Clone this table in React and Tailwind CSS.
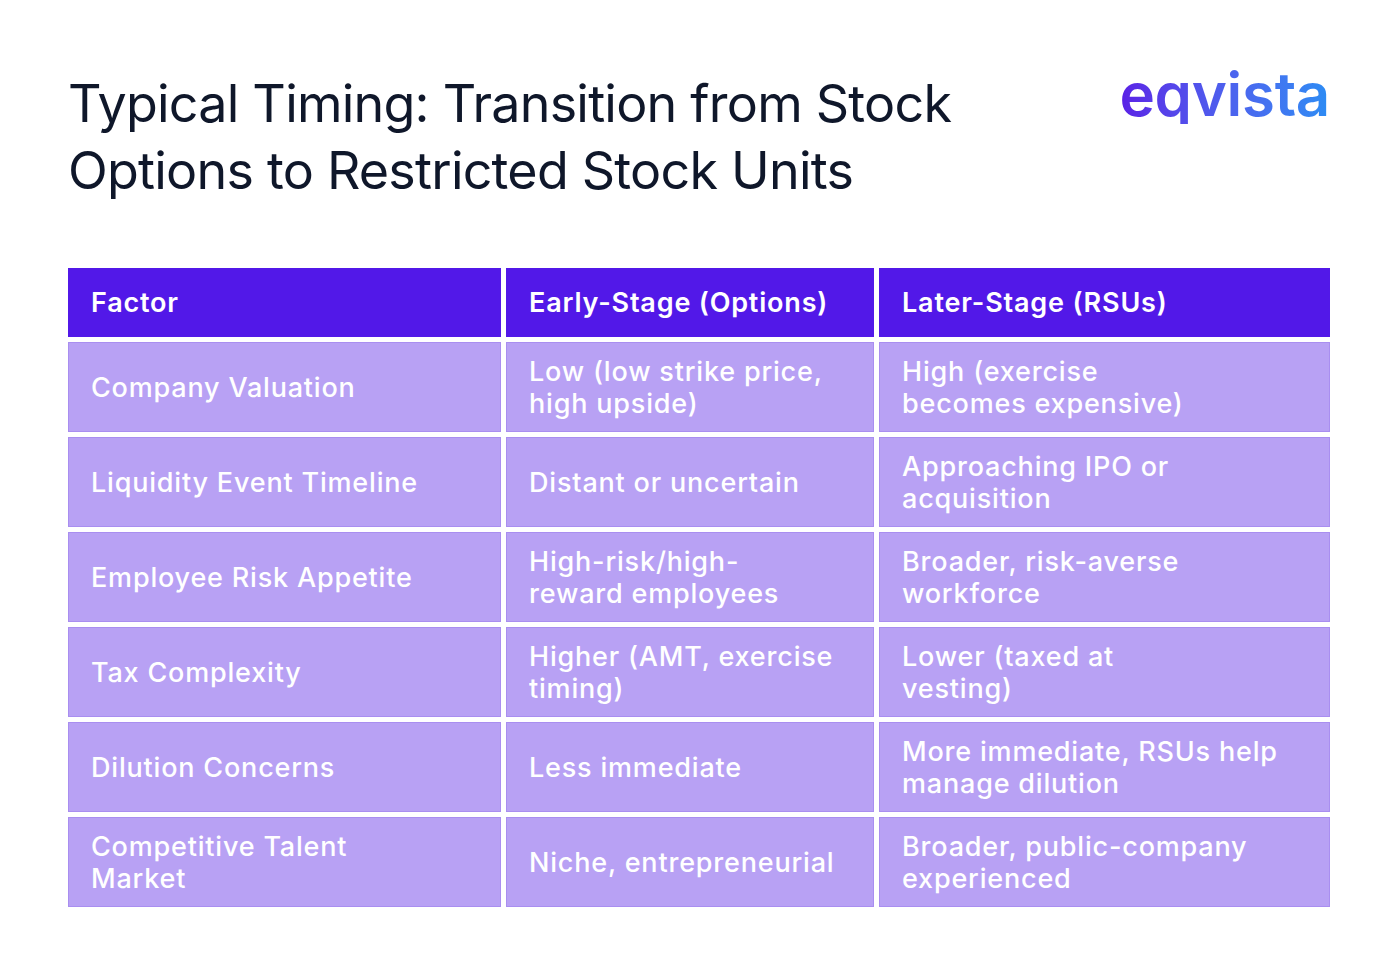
import React from 'react';

// line breaks follow the reference layout
const rows = [
  ['Company Valuation', 'Low (low strike price,\nhigh upside)', 'High (exercise\nbecomes expensive)'],
  ['Liquidity Event Timeline', 'Distant or uncertain', 'Approaching IPO or\nacquisition'],
  ['Employee Risk Appetite', 'High-risk/high-\nreward employees', 'Broader, risk-averse\nworkforce'],
  ['Tax Complexity', 'Higher (AMT, exercise\ntiming)', 'Lower (taxed at\nvesting)'],
  ['Dilution Concerns', 'Less immediate', 'More immediate, RSUs help\nmanage dilution'],
  ['Competitive Talent\nMarket', 'Niche, entrepreneurial', 'Broader, public-company\nexperienced'],
];

const headers = ['Factor', 'Early-Stage (Options)', 'Later-Stage (RSUs)'];

export default function App() {
  return (
    <div className="w-[1400px] h-[978px] bg-white font-['Inter',sans-serif]">
      {/* header */}
      <div className="flex justify-between items-start pl-[68px] pr-[70px] pt-[70px]">
        <h1 className="text-[52px] leading-[67px] tracking-[-0.015em] text-[#0f172a] font-normal">
          Typical Timing: Transition from Stock
          <br />
          Options to Restricted Stock Units
        </h1>
        <div className="text-[60px] leading-none font-semibold tracking-[-0.005em] bg-gradient-to-r from-[#5a1ee6] to-[#2b8cf4] bg-clip-text text-transparent mt-[-6px]">
          eqvista
        </div>
      </div>

      {/* table */}
      <div className="mx-[68px] mt-[64px] grid grid-cols-[433px_368px_451px] gap-[5px] text-white">
        {headers.map(h => (
          <div key={h} className="h-[69px] bg-[#5218e8] flex items-center px-[23px] pt-[2px] text-[27px] font-semibold tracking-[0.03em]">
            {h}
          </div>
        ))}
        {rows.map((row, i) =>
          row.map((cell, j) => (
            <div
              key={i + '-' + j}
              className="h-[90px] bg-[#b8a1f4] border border-[#a98ef0] flex items-center pl-[22px] pr-[10px] pt-[2px] text-[27px] leading-[32px] font-medium tracking-[0.03em] whitespace-pre-line"
            >
              {cell}
            </div>
          ))
        )}
      </div>
    </div>
  );
}
